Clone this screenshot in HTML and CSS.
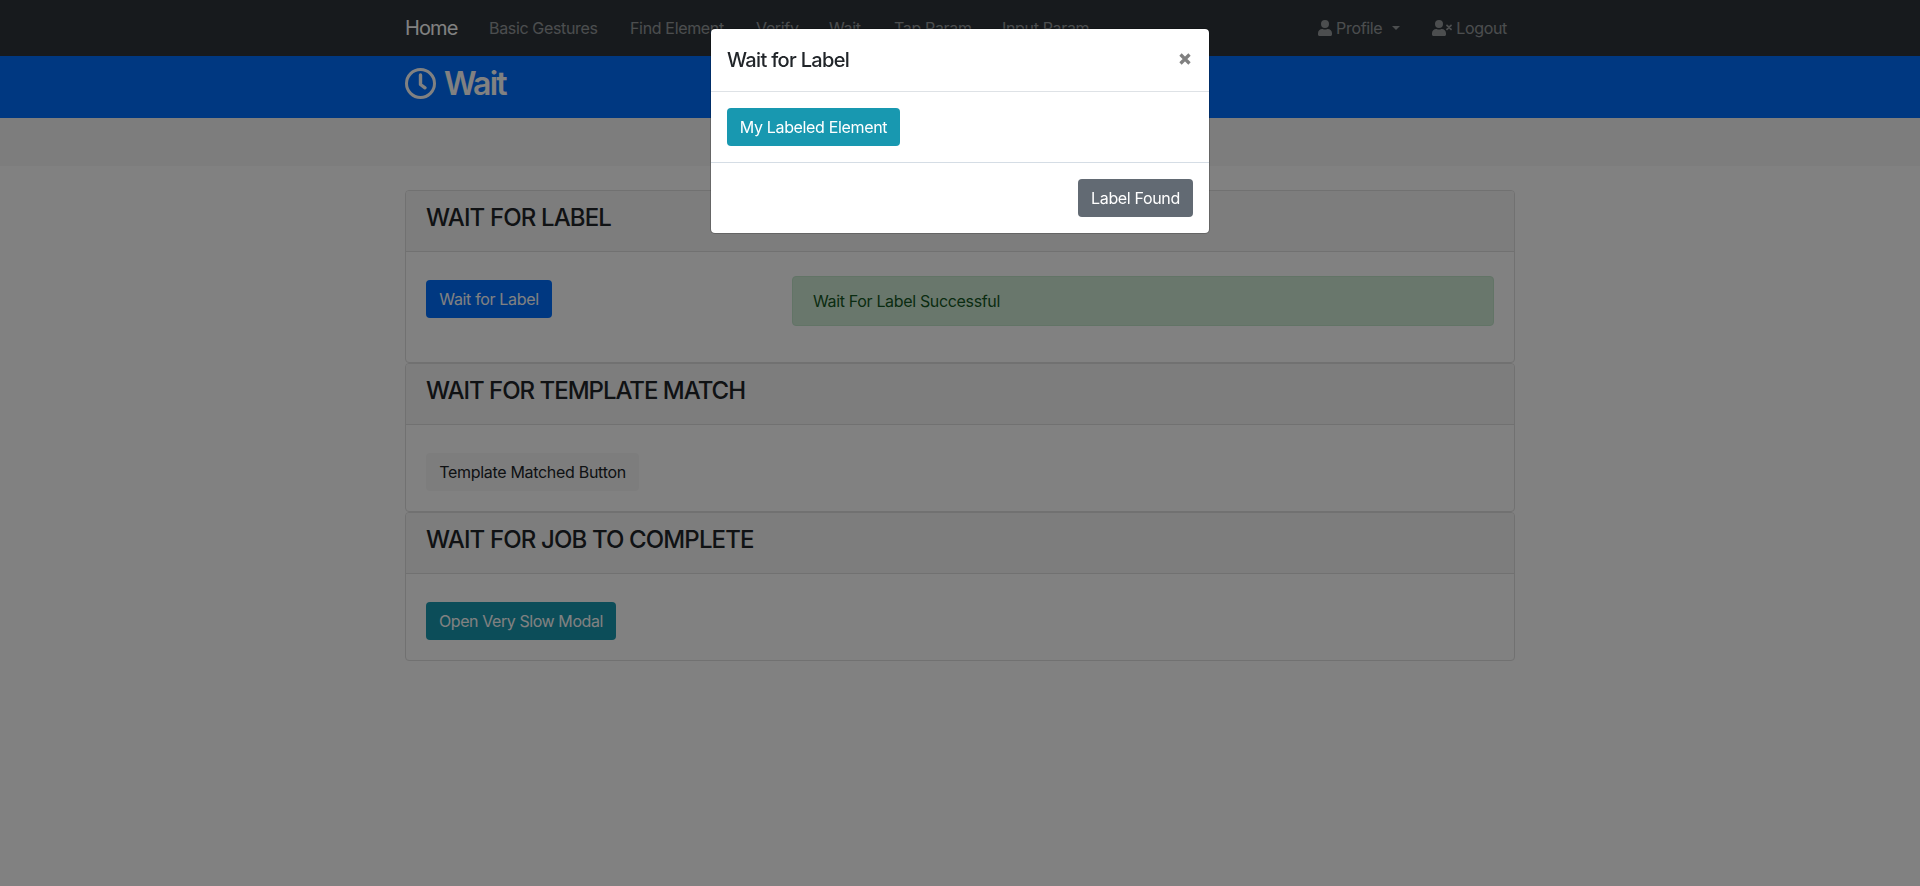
FILE: index.html
```html
<!DOCTYPE html>
<html lang="en">
<head>
<meta charset="utf-8">
<title>Wait</title>
<link rel="stylesheet" href="styles.css">
</head>
<body>
<nav class="navbar">
  <div class="container nav-inner">
    <a class="brand">Home</a>
    <div class="nav-links">
      <a>Basic Gestures</a><a>Find Element</a><a>Verify</a><a>Wait</a><a>Tap Param</a><a>Input Param</a>
    </div>
    <div class="nav-user">
      <a class="profile"><svg width="14" height="16" viewBox="0 0 448 512"><path fill="currentColor" d="M224 256a128 128 0 1 0 0-256 128 128 0 1 0 0 256zm89.600 32h-16.700a174 174 0 0 1-145.800 0h-16.700C60.200 288 0 348.200 0 422.400V464c0 26.500 21.500 48 48 48h352c26.500 0 48-21.500 48-48v-41.600c0-74.200-60.200-134.400-134.400-134.400z"/></svg><span>Profile</span><i class="caret"></i></a>
      <a class="logout"><svg width="20" height="16" viewBox="0 0 640 512"><path fill="currentColor" d="M224 256a128 128 0 1 0 0-256 128 128 0 1 0 0 256zm89.600 32h-16.700a174 174 0 0 1-145.800 0h-16.700C60.200 288 0 348.200 0 422.400V464c0 26.500 21.500 48 48 48h352c26.500 0 48-21.500 48-48v-41.600c0-74.200-60.200-134.400-134.400-134.400z"/><path fill="none" stroke="currentColor" stroke-width="56" stroke-linecap="round" d="M480 172 608 300M608 172 480 300"/></svg><span>Logout</span></a>
    </div>
  </div>
</nav>
<header class="title-bar">
  <div class="container title-inner">
    <svg width="31" height="31" viewBox="0 0 31 31" fill="none"><circle cx="15.500" cy="15.500" r="14" stroke="currentColor" stroke-width="3"/><path d="M15.500 7v9.500l4.500 3.300" stroke="currentColor" stroke-width="3.400" stroke-linecap="round" stroke-linejoin="round"/></svg>
    <h1>Wait</h1>
  </div>
</header>
<section class="strip"></section>
<main class="container cards">
  <section class="card">
    <div class="card-header"><h4 class="h-label">WAIT FOR LABEL</h4></div>
    <div class="card-body row">
      <div class="col"><button class="btn primary">Wait for Label</button></div>
      <div class="alert"><span>Wait For Label Successful</span></div>
    </div>
  </section>
  <section class="card">
    <div class="card-header"><h4 class="h-template">WAIT FOR TEMPLATE MATCH</h4></div>
    <div class="card-body"><button class="btn light">Template Matched Button</button></div>
  </section>
  <section class="card">
    <div class="card-header"><h4 class="h-job">WAIT FOR JOB TO COMPLETE</h4></div>
    <div class="card-body"><button class="btn info slow">Open Very Slow Modal</button></div>
  </section>
</main>
<div class="overlay">
  <div class="modal">
    <div class="modal-header"><h5>Wait for Label</h5><svg class="close" width="12" height="12" viewBox="0 0 12 12"><path d="M1.500 1.500l9 9M10.500 1.500l-9 9" stroke="currentColor" stroke-width="3.300"/></svg></div>
    <div class="modal-body"><button class="btn info labeled">My Labeled Element</button></div>
    <div class="modal-footer"><button class="btn secondary">Label Found</button></div>
  </div>
</div>
</body>
</html>
```
FILE: styles.css
```css
* { box-sizing: border-box; }
html, body { height: 100%; overflow: hidden; }
body { margin: 0; background: #fff; color: #212529; font: 16px/1.5 Inter, "Liberation Sans", sans-serif; letter-spacing: -0.34px; }
h1, h4, h5 { margin: 0; font-weight: 500; }
.container { width: 1110px; margin: 0 auto; }
.navbar { height: 56px; background: #2e353a; }
.nav-inner { height: 56px; display: flex; align-items: center; color: rgba(255,255,255,.5); white-space: nowrap; }
.brand { width: 84px; font-size: 20px; line-height: 30px; color: #fff; letter-spacing: -0.9px; }
.nav-links { display: grid; grid-template-columns: 141px 126px 73px 65px 108px 90px; }
.nav-user { margin-left: auto; padding-right: 8px; display: flex; gap: 32px; }
.nav-user a { display: flex; align-items: center; }
.nav-user span { margin-left: 4px; }
.caret { margin-left: 10px; border: 4.8px solid transparent; border-top-color: currentColor; border-bottom: 0; }
.title-bar { height: 62px; background: #0070ff; color: #fff; }
.title-inner { display: flex; align-items: center; height: 54px; gap: 8px; }
.title-bar h1 { padding-top: 1px; font-size: 32px; line-height: 38px; font-weight: 600; letter-spacing: -1.8px; }
.strip { height: 48px; background: #f8f8f8; }
.cards { padding-top: 24px; }
.card { border: 1px solid #dfdfdf; border-radius: 4px; background: #fff; }
.card-header { height: 61px; padding: 12px 20px; background: #f7f7f7; border-bottom: 1px solid #dfdfdf; border-radius: 3px 3px 0 0; }
.card-header h4 { font-size: 24px; line-height: 29px; letter-spacing: -0.86px; }
.card-header .h-template { letter-spacing: -1.02px; }
.card-body { padding: 28px 20px 20px; display: flex; }
.row { padding-top: 24px; }
.col { width: 366px; padding-top: 4px; }
.alert { width: 702px; height: 50px; margin-bottom: 16px; padding: 12px 20px; border: 1px solid #c1e5ca; border-radius: 4px; background: #d0ecd6; color: #155724; }
.btn { height: 38px; padding: 0; border: 0; border-radius: 4px; font: inherit; letter-spacing: inherit; color: #fff; white-space: nowrap; text-align: center; }
.primary { width: 126px; background: #0070ff; }
.light { width: 213px; background: #f8f8f8; color: #212529; letter-spacing: -0.3px; }
.info { background: #1898b0; }
.slow { width: 190px; letter-spacing: -0.42px; }
.labeled { width: 173px; }
.secondary { width: 115px; background: #626a73; }
.overlay { position: fixed; inset: 0; padding-top: 28px; background: rgba(0,0,0,.495); }
.modal { width: 500px; margin: 0 auto; background: #fff; background-clip: padding-box; border: 1px solid rgba(0,0,0,.2); border-radius: 5px; }
.modal-header { height: 63px; padding: 16px; display: flex; justify-content: space-between; border-bottom: 1px solid #dee2e6; }
.modal-header h5 { font-size: 20px; line-height: 30px; letter-spacing: -0.67px; }
.close { margin: 8px 2px 0 0; color: #808080; }
.modal-body { height: 70px; padding: 16px; }
.modal-footer { height: 71px; padding: 16px; border-top: 1px solid #d5dde5; display: flex; justify-content: flex-end; }
```
